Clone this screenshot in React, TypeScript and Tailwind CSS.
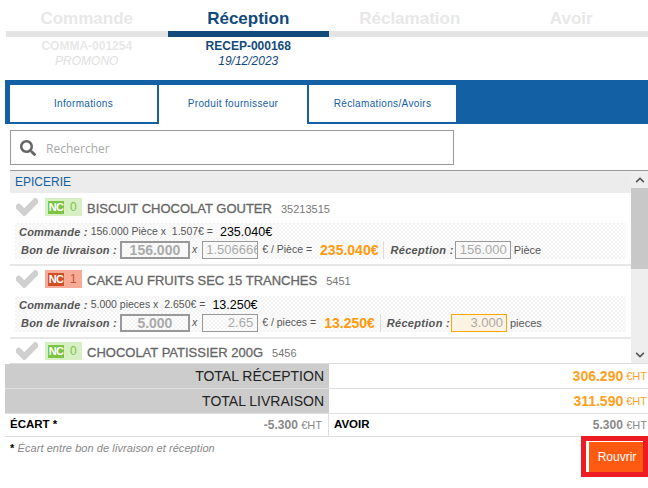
import React from 'react';
import { FaCheck, FaSearch, FaChevronUp, FaChevronDown } from 'react-icons/fa';

const Step = ({ title, active, line1, line2 }: { title: string; active?: boolean; line1?: string; line2?: string }) => (
  <div className="flex-1 text-center">
    <div className={`h-[31px] pt-[8px] text-[17px] leading-[22px] font-bold ${active ? 'text-[#134a7c]' : 'text-[#e8e8e8]'}`}>{title}</div>
    <div className={`h-[6px] ${active ? 'bg-[#134a7c]' : 'bg-[#e4e4e4]'}`} />
    {line1 && <div className={`mt-[2px] text-[12px] leading-[15px] font-bold ${active ? 'text-[#134a7c]' : 'text-[#e8e8e8]'}`}>{line1}</div>}
    {line2 && <div className={`text-[12px] leading-[15px] italic ${active ? 'text-[#134a7c]' : 'text-[#e0e0e0]'}`}>{line2}</div>}
  </div>
);

const Tab = ({ label, className }: { label: string; className: string }) => (
  <div className={`flex justify-center bg-white pt-[12px] text-[10px] leading-[14px] tracking-[0.35px] text-[#1460a5] ${className}`}>{label}</div>
);

const Badge = ({ count }: { count: number }) => {
  const nc = count > 0;
  return (
    <div className={`w-[37px] h-[18px] flex items-center pl-[3px] ${nc ? 'bg-[#f5ab98]' : 'bg-[#d6efc4]'}`}>
      <span className={`w-[16px] h-[13px] flex items-center justify-center text-[11px] tracking-[-0.6px] font-bold text-white ${nc ? 'bg-[#d14f24]' : 'bg-[#7cc444]'}`}>NC</span>
      <span className={`ml-[6px] text-[12px] ${nc ? 'text-[#d14f24]' : 'text-[#7cc444]'}`}>{count}</span>
    </div>
  );
};

const Title = ({ count, name, code, className }: { count: number; name: string; code: string; className: string }) => (
  <div className={`h-[30px] pl-[6px] flex items-start ${className}`}>
    <FaCheck className="-mt-[2px] w-[22px] h-[22px] text-[#d0d0d0] stroke-[40px]" />
    <div className="ml-[7px]"><Badge count={count} /></div>
    <span className="ml-[5px] mt-[2px] text-[13px] leading-[18px] text-[#666] [-webkit-text-stroke:0.3px_#666]">{name}</span>
    <span className="ml-[9px] mt-[2px] text-[11px] leading-[18px] text-[#777]">{code}</span>
  </div>
);

type RowProps = {
  count: number; name: string; code: string; qty: string; unit: string; price: string; total: string;
  blQty: string; blPrice: string; blTotal: string; recep: string; highlight?: boolean; priceClip?: boolean; titleClass: string;
};

const Row = (p: RowProps) => (
  <div className="h-[73px] border-b-2 border-[#e8e8e8]">
    <Title count={p.count} name={p.name} code={p.code} className={p.titleClass} />
    <div className="ml-[5px] w-[611px] h-[36px] bg-[repeating-conic-gradient(#f4f4f4_0_25%,#fdfdfd_0_50%)] bg-[length:4px_4px]">
      <div className="h-[18px] pl-[4px] flex items-center text-[10.5px] text-[#555]">
        <span className="font-bold italic text-[11px] tracking-[0.2px]">Commande :</span>
        <span className="ml-[3px] whitespace-pre">{p.qty} {p.unit} x  {p.price}€ =</span>
        <span className="ml-[7px] text-[12.5px] text-black">{p.total}</span>
      </div>
      <div className="h-[18px] pl-[6px] flex items-center text-[10.5px] text-[#555]">
        <span className="font-bold italic text-[11px] tracking-[0.2px]">Bon de livraison :</span>
        <div className="ml-[3px] w-[70px] h-[18px] border-2 border-[#999] flex items-center justify-center text-[14px] font-bold text-[#aaa]">{p.blQty}</div>
        <span className="ml-[2px] italic">x</span>
        <div className={`ml-[5px] w-[56px] h-[18px] border border-[#999] overflow-hidden flex items-center text-[13px] text-[#aaa] whitespace-nowrap ${p.priceClip ? 'justify-start pl-[3px]' : 'justify-end pr-[4px]'}`}>{p.blPrice}</div>
        <span className="ml-[4px]">€ / {p.unit} =</span>
        <span className="ml-[8px] text-[14px] font-bold text-[#ff9a0d]">{p.blTotal}</span>
        <div className="ml-[5px] h-[18px] border-l border-[#ddd]" />
        <span className="ml-[6px] font-bold italic text-[11px] tracking-[0.3px]">Réception :</span>
        <div className={`ml-[1px] w-[56px] h-[18px] border flex items-center justify-end pr-[3px] text-[13px] text-[#aaa] ${p.highlight ? 'border-[#ffa500] bg-[#fdf3e2]' : 'border-[#999]'}`}>{p.recep}</div>
        <span className="ml-[3px] text-[11px]">{p.unit}</span>
      </div>
    </div>
  </div>
);

const TotalRow = ({ label, value }: { label: string; value: string }) => (
  <div className="h-[25px] flex border-b border-[#e0e0e0]">
    <div className="w-[324px] bg-[#cccccc] flex items-center justify-end pr-[5px] text-[14px] text-[#222]">{label}</div>
    <div className="flex-1 flex items-center justify-end pr-[1px] text-[14px] font-bold text-[#ff9f1c]">
      {value}<span className="ml-[3px] text-[11px] font-normal">€HT</span>
    </div>
  </div>
);

export default function App() {
  return (
    <div className="w-[648px] h-[488px] overflow-hidden bg-white font-['Liberation_Sans',Arial,sans-serif]">
      <div className="flex ml-[6px] w-[646px] h-[80px]">
        <Step title="Commande" line1="COMMA-001254" line2="PROMONO" />
        <Step title="Réception" active line1="RECEP-000168" line2="19/12/2023" />
        <Step title="Réclamation" />
        <Step title="Avoir" />
      </div>

      <div className="ml-[5px] h-[44px] bg-[#1460a5] flex items-start pt-[5px] pl-[5px] gap-[2px]">
        <Tab label="Informations" className="w-[147px] h-[37px]" />
        <Tab label="Produit fournisseur" className="w-[148px] h-[39px]" />
        <Tab label="Réclamations/Avoirs" className="w-[147px] h-[37px]" />
      </div>

      <div className="ml-[10px] mt-[6px] w-[444px] h-[35px] border border-[#999] flex items-center pl-[9px]">
        <FaSearch className="w-[16px] h-[16px] text-[#666]" />
        <span className="ml-[10px] mt-[2px] font-['Open_Sans'] text-[12px] text-[#aaa]">Rechercher</span>
      </div>

      <div className="ml-[10px] mt-[5px] h-[194px] border-t border-b border-t-[#999] border-b-[#ddd] flex overflow-hidden">
        <div className="w-[621px] overflow-hidden">
          <div className="h-[22px] bg-[#ececec] pl-[5px] flex items-center text-[12px] text-[#1460a5]">EPICERIE</div>
          <Row count={0} name="BISCUIT CHOCOLAT GOUTER" code="35213515" qty="156.000" unit="Pièce" price="1.507" total="235.040€"
            blQty="156.000" blPrice="1.506666" blTotal="235.040€" recep="156.000" priceClip titleClass="pt-[5px]" />
          <Row count={1} name="CAKE AU FRUITS SEC 15 TRANCHES" code="5451" qty="5.000" unit="pieces" price="2.650" total="13.250€"
            blQty="5.000" blPrice="2.65" blTotal="13.250€" recep="3.000" highlight titleClass="pt-[4px]" />
          <Title count={0} name="CHOCOLAT PATISSIER 200G" code="5456" className="pt-[3px]" />
        </div>
        <div className="w-[17px] bg-[#eeeeee] flex flex-col">
          <div className="h-[17px] flex items-center justify-center"><FaChevronUp className="w-[10px] h-[10px] text-[#555]" /></div>
          <div className="h-[81px] bg-[#c8c8c8]" />
          <div className="flex-1" />
          <div className="h-[17px] flex items-center justify-center"><FaChevronDown className="w-[10px] h-[10px] text-[#555]" /></div>
        </div>
      </div>

      <div className="ml-[5px]">
        <TotalRow label="TOTAL RÉCEPTION" value="306.290" />
        <TotalRow label="TOTAL LIVRAISON" value="311.590" />
        <div className="h-[23px] flex border-b border-[#e0e0e0] text-[12px]">
          <div className="w-[324px] border-r border-[#e0e0e0] pl-[5px] pr-[6px] flex items-center justify-between">
            <span className="font-bold text-[11.5px] text-black">ÉCART *</span>
            <span className="font-bold text-[#888]">-5.300 <span className="text-[11px] font-normal">€HT</span></span>
          </div>
          <div className="flex-1 pl-[5px] pr-[1px] flex items-center justify-between">
            <span className="font-bold text-[11.5px] text-black">AVOIR</span>
            <span className="font-bold text-[#888]">5.300 <span className="text-[11px] font-normal">€HT</span></span>
          </div>
        </div>
        <div className="flex justify-between">
          <div className="pl-[5px] pt-[3px] text-[11px] tracking-[0.07px] italic text-[#888]"><span className="font-bold not-italic text-black">*</span> Écart entre bon de livraison et réception</div>
          <div className="-mt-[1px] border-[5px] border-[#ed1c24] w-[67px] h-[41px]">
            <div className="h-full border-l-[3px] border-t border-white bg-[#ff5a12] pl-[2px] flex items-center justify-center text-[12px] text-white">Rouvrir</div>
          </div>
        </div>
      </div>
    </div>
  );
}
